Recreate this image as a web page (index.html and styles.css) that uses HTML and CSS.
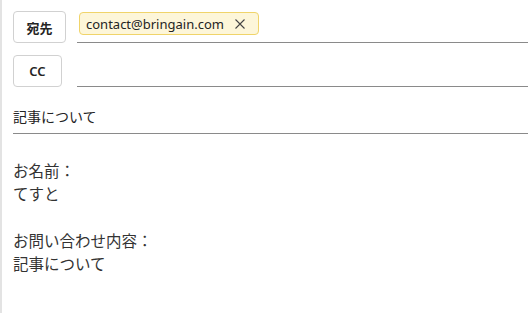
FILE: index.html
```html
<!DOCTYPE html>
<html lang="ja">
<head>
    <meta charset="UTF-8">
    <meta name="viewport" content="width=device-width, initial-scale=1.0">
    <title>メール作成</title>
    <link rel="stylesheet" href="styles.css">
</head>
<body>
    <div class="pane">
        <div class="row">
            <button class="addr-btn to">宛先</button>
            <div class="field">
                <span class="chip">contact@bringain.com
                    <svg class="chip-x" width="12" height="12" viewBox="0 0 12 12"><path d="M1.5 1.5 L10.5 10.5 M10.5 1.5 L1.5 10.5" stroke="#444" stroke-width="1.1" fill="none"/></svg>
                </span>
            </div>
        </div>
        <div class="row">
            <button class="addr-btn cc">CC</button>
            <div class="field"></div>
        </div>
        <div class="subject">記事について</div>
        <div class="mail-body">
            <p>お名前：</p>
            <p>てすと</p>
            <p>&nbsp;</p>
            <p>お問い合わせ内容：</p>
            <p>記事について</p>
        </div>
    </div>
</body>
</html>
```
FILE: styles.css
```css
html, body {
    margin: 0;
    padding: 0;
    background: #fff;
}
body {
    font-family: "Noto Sans", "Noto Sans CJK JP", sans-serif;
    color: #242424;
}
.pane {
    border-left: 2px solid #e3e3e3;
    height: 313px;
    box-sizing: border-box;
    padding: 11px 0 0 11px;
}
.row {
    display: grid;
    grid-template-columns: 64px 1fr;
    height: 32px;
    margin-bottom: 12px;
}
.addr-btn {
    box-sizing: border-box;
    height: 32px;
    border: 1px solid #d1d1d1;
    border-radius: 4px;
    background: #fff;
    font-family: "Noto Sans", "Noto Sans CJK JP", sans-serif;
    font-size: 13px;
    font-weight: bold;
    color: #242424;
    padding: 0;
}
.to {
    width: 53px;
}
.cc {
    width: 49px;
    font-weight: 600;
}
.field {
    border-bottom: 1px solid #8a8a8a;
    display: flex;
    align-items: flex-start;
}
.chip {
    margin-top: 1px;
    margin-left: 2px;
    box-sizing: border-box;
    height: 23px;
    display: inline-flex;
    align-items: center;
    padding: 0 12px 0 6px;
    background: #fdf6d9;
    border: 1px solid #f0d46a;
    border-radius: 4px;
    font-size: 13px;
    color: #242424;
}
.chip-x {
    margin-left: 10px;
}
.subject {
    margin-top: 20px;
    font-size: 14px;
    line-height: 20px;
    padding-bottom: 6px;
    border-bottom: 1px solid #8a8a8a;
    color: #242424;
}
.mail-body {
    margin-top: 26px;
    font-size: 15.5px;
    line-height: 23.3px;
    color: #333;
}
.mail-body p {
    margin: 0;
}
```
